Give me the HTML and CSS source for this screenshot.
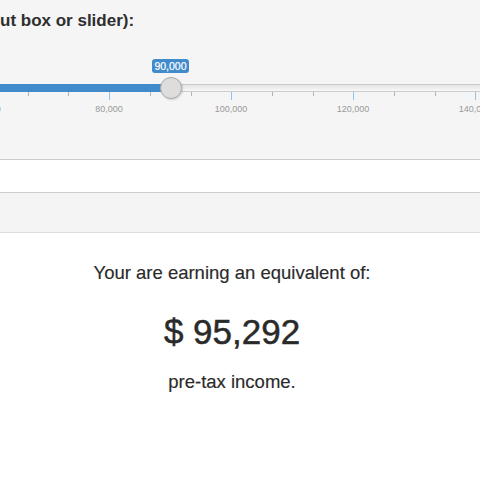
FILE: index.html
```html
<!DOCTYPE html>
<html>
<head>
<meta charset="utf-8">
<link rel="stylesheet" href="styles.css">
</head>
<body>
<div class="well">
  <div class="control-label">ut box or slider):</div>
  <div class="irs">
    <div class="irs-line"></div>
    <div class="irs-bar"></div>
    <span class="irs-pol big" style="left:-13px"></span>
    <span class="irs-pol small" style="left:28px"></span>
    <span class="irs-pol small" style="left:68px"></span>
    <span class="irs-pol big" style="left:109px"></span>
    <span class="irs-pol small" style="left:150px"></span>
    <span class="irs-pol small" style="left:191px"></span>
    <span class="irs-pol big" style="left:231px"></span>
    <span class="irs-pol small" style="left:272px"></span>
    <span class="irs-pol small" style="left:313px"></span>
    <span class="irs-pol big" style="left:353px"></span>
    <span class="irs-pol small" style="left:394px"></span>
    <span class="irs-pol small" style="left:435px"></span>
    <span class="irs-pol big" style="left:475px"></span>
    <span class="irs-text" style="left:-13px">60,000</span>
    <span class="irs-text" style="left:109px">80,000</span>
    <span class="irs-text" style="left:231px">100,000</span>
    <span class="irs-text" style="left:353px">120,000</span>
    <span class="irs-text" style="left:475px">140,000</span>
    <span class="irs-handle"></span>
    <span class="irs-single">90,000</span>
  </div>
</div>
<div class="band-white"></div>
<div class="band-gray"></div>
<div class="result">
  <p class="result-line">Your are earning an equivalent of:</p>
  <p class="result-amount">$ 95,292</p>
  <p class="result-line last">pre-tax income.</p>
</div>
</body>
</html>
```

FILE: styles.css
```css
html, body {
  margin: 0;
  padding: 0;
  background: #ffffff;
  font-family: "Liberation Sans", Arial, Helvetica, sans-serif;
  color: #333333;
  overflow: hidden;
}

.well {
  background: #f5f5f5;
  padding: 11px 0 44px 0;
  border-bottom: 1px solid #cccccc;
}

.control-label {
  font-weight: bold;
  font-size: 17px;
  line-height: 20px;
  white-space: nowrap;
  color: #2e2e2e;
}

.irs {
  position: relative;
  height: 56px;
  margin-top: 28px;
  overflow: hidden;
}

.irs-line {
  position: absolute;
  left: -10px;
  right: -10px;
  top: 25px;
  height: 6px;
  border: 1px solid #cccccc;
  background: linear-gradient(to bottom, #e4e4e4, #f8f8f8);
}

.irs-bar {
  position: absolute;
  left: -10px;
  width: 181px;
  top: 25px;
  height: 8px;
  background: #428bca;
}

.irs-pol {
  position: absolute;
  top: 33px;
  width: 1px;
}

.irs-pol.big {
  height: 8px;
  background: #428bca;
  opacity: 0.5;
}

.irs-pol.small {
  height: 4px;
  background: #999999;
  opacity: 0.7;
}

.irs-text {
  position: absolute;
  top: 45px;
  font-size: 9px;
  line-height: 11px;
  color: #999999;
  transform: translateX(-50%);
  white-space: nowrap;
}

.irs-handle {
  position: absolute;
  left: 160px;
  top: 18px;
  width: 20px;
  height: 20px;
  border: 1px solid #aaaaaa;
  border-radius: 50%;
  background: #dddddd;
  box-shadow: 1px 1px 2px rgba(0, 0, 0, 0.15);
}

.irs-single {
  position: absolute;
  left: 152px;
  top: 0;
  width: 37px;
  height: 14px;
  line-height: 14px;
  text-align: center;
  font-size: 10.5px;
  color: #ffffff;
  background: #428bca;
  border-radius: 3px;
  -webkit-text-stroke: 0.2px #ffffff;
}

.band-white {
  height: 32px;
  background: #ffffff;
  border-bottom: 1px solid #cccccc;
}

.band-gray {
  height: 39px;
  background: #f4f4f4;
  border-bottom: 1px solid #dddddd;
}

.result {
  padding: 29px 16px 0 0;
  text-align: center;
  color: #2a2a2a;
}

.result p {
  margin: 0;
}

.result-line {
  font-size: 18.5px;
  line-height: 22px;
  -webkit-text-stroke: 0.15px #2a2a2a;
}

.result-amount {
  font-size: 35px;
  line-height: 40px;
  margin-top: 28px !important;
  -webkit-text-stroke: 0.5px #2a2a2a;
}

.result-line.last {
  margin-top: 19px !important;
}
```
